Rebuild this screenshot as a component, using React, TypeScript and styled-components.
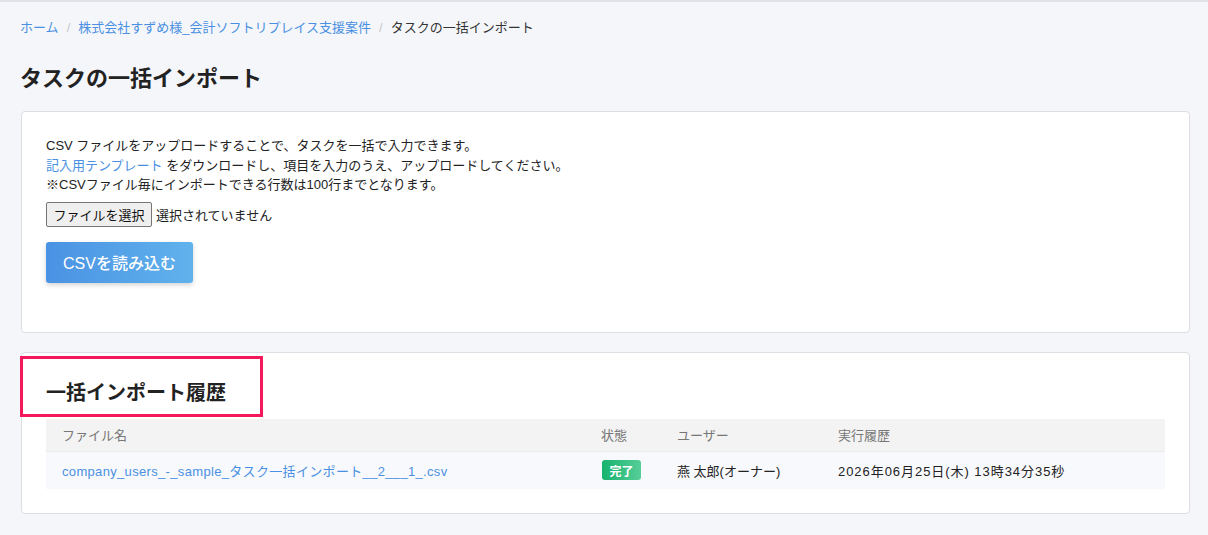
import styled, { createGlobalStyle } from "styled-components";

const GlobalStyle = createGlobalStyle`
  html, body {
    margin: 0;
    padding: 0;
    background: #f5f6fa;
  }
  body {
    font-family: "Liberation Sans", "Noto Sans CJK JP", sans-serif;
    color: #333;
    font-size: 13px;
  }
`;

const Page = styled.div`
  border-top: 2px solid #e2e3e8;
  padding: 17px 18px 20px 20px;
  box-sizing: border-box;
  min-height: 535px;
`;

const Breadcrumb = styled.nav`
  display: flex;
  align-items: center;
  font-size: 13px;
  line-height: 18px;
`;

const Crumb = styled.a<{ $current?: boolean }>`
  color: ${(p) => (p.$current ? "#333" : "#4a90e2")};
  text-decoration: none;
`;

const Sep = styled.span`
  color: #c8c8c8;
  margin: 0 8px;
`;

const Title = styled.h1`
  font-size: 22px;
  font-weight: 700;
  line-height: 30px;
  margin: 27px 0 17px;
  color: #222;
`;

const Card = styled.section`
  background: #fff;
  border: 1px solid #dcdee3;
  border-radius: 4px;
  margin-left: 1px;
  padding: 24px 24px 49px;
  position: relative;
  & + & {
    margin-top: 19px;
    padding-bottom: 24px;
  }
`;

const Text = styled.p`
  margin: 0;
  font-size: 13px;
  line-height: 19.5px;
  color: #222;
`;

const Link = styled.a<{ $spread?: boolean }>`
  color: #4a90e2;
  text-decoration: none;
  letter-spacing: ${(p) => (p.$spread ? "0.33px" : "normal")};
`;

const FileRow = styled.div`
  display: flex;
  align-items: center;
  gap: 4px;
  margin-top: 7px;
  font-size: 13px;
  color: #222;
`;

const FileButton = styled.button`
  height: 25px;
  width: 106px;
  padding: 0;
  font-family: inherit;
  font-size: 13px;
  color: #111;
  background: #efefef;
  border: 1px solid #767676;
  border-radius: 2px;
`;

const PrimaryButton = styled.button`
  margin-top: 15px;
  width: 147px;
  height: 41px;
  border: none;
  border-radius: 3px;
  background: linear-gradient(90deg, #4a92e3, #60b2ec);
  color: #fff;
  font-family: inherit;
  font-size: 16px;
  font-weight: 500;
  box-shadow: 0 2px 5px rgba(0, 0, 0, 0.18);
`;

const SectionTitle = styled.h2`
  font-size: 20px;
  font-weight: 700;
  line-height: 24px;
  margin: 4px 0 14px;
  color: #222;
`;

const Highlight = styled.div`
  position: absolute;
  left: -2px;
  top: 3px;
  width: 237px;
  height: 55px;
  border: 3px solid #f5195b;
  pointer-events: none;
`;

const Table = styled.div`
  display: grid;
  grid-template-columns: 539px 76px 161px 1fr;
`;

const HeadCell = styled.div`
  background: #f3f3f3;
  color: #777;
  font-size: 13px;
  height: 32px;
  display: flex;
  align-items: center;
  padding-left: 16px;
  border-bottom: 1px solid #ebebeb;
`;

const Cell = styled.div<{ $wide?: boolean }>`
  background: #f8f9fc;
  color: #222;
  font-size: 13px;
  height: 37px;
  display: flex;
  align-items: center;
  padding-left: 16px;
  letter-spacing: ${(p) => (p.$wide ? "0.95px" : "normal")};
`;

const Badge = styled.span`
  display: inline-flex;
  align-items: center;
  justify-content: center;
  width: 39px;
  height: 20px;
  margin-left: 1px;
  border-radius: 3px;
  background: linear-gradient(90deg, #17b26d, #56ce98);
  color: #fff;
  font-size: 12px;
  font-weight: 700;
`;

export default function App() {
  return (
    <>
      <GlobalStyle />
      <Page>
        <Breadcrumb>
          <Crumb href="#">ホーム</Crumb>
          <Sep>/</Sep>
          <Crumb href="#">株式会社すずめ様_会計ソフトリプレイス支援案件</Crumb>
          <Sep>/</Sep>
          <Crumb $current>タスクの一括インポート</Crumb>
        </Breadcrumb>
        <Title>タスクの一括インポート</Title>

        <Card>
          <Text>CSV ファイルをアップロードすることで、タスクを一括で入力できます。</Text>
          <Text>
            <Link href="#">記入用テンプレート</Link> をダウンロードし、項目を入力のうえ、アップロードしてください。
          </Text>
          <Text>※CSVファイル毎にインポートできる行数は100行までとなります。</Text>
          <FileRow>
            <FileButton>ファイルを選択</FileButton>
            <span>選択されていません</span>
          </FileRow>
          <PrimaryButton>CSVを読み込む</PrimaryButton>
        </Card>

        <Card>
          <Highlight />
          <SectionTitle>一括インポート履歴</SectionTitle>
          <Table>
            <HeadCell>ファイル名</HeadCell>
            <HeadCell>状態</HeadCell>
            <HeadCell>ユーザー</HeadCell>
            <HeadCell>実行履歴</HeadCell>
            <Cell>
              <Link href="#" $spread>
                company_users_-_sample_タスク一括インポート__2___1_.csv
              </Link>
            </Cell>
            <Cell>
              <Badge>完了</Badge>
            </Cell>
            <Cell>燕 太郎(オーナー)</Cell>
            <Cell $wide>2026年06月25日(木) 13時34分35秒</Cell>
          </Table>
        </Card>
      </Page>
    </>
  );
}
